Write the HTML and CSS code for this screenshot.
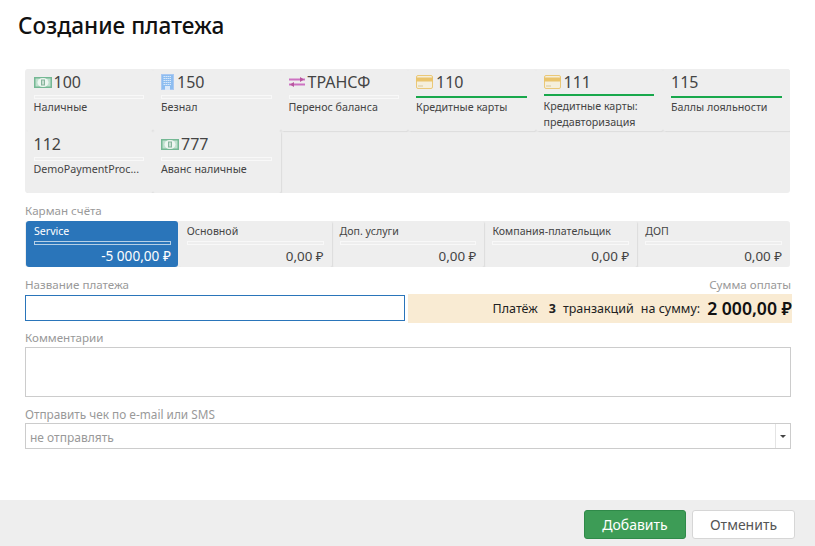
FILE: index.html
```html
<!DOCTYPE html>
<html lang="ru">
<head>
<meta charset="utf-8">
<title>Создание платежа</title>
<link rel="stylesheet" href="styles.css">
</head>
<body>
<div class="dialog">
  <h1 class="title">Создание платежа</h1>
  <div class="content">
    <div class="methods">
      <div class="method">
        <div class="head"><svg class="ic money" width="18" height="11" viewBox="0 0 18 11"><rect width="18" height="11" fill="#74b894"/><rect x="1.500" y="1.500" width="15" height="8" fill="#bfe0ce"/><ellipse cx="9" cy="5.500" rx="5.500" ry="4.500" fill="#eef6f1"/><rect x="7" y="2.500" width="4" height="6" fill="#86b49c"/><rect x="8.200" y="3.500" width="1.600" height="4" fill="#dcebe2"/></svg><span>100</span></div>
        <div class="bar"></div><div class="name">Наличные</div>
      </div>
      <div class="method">
        <div class="head"><svg class="ic building" width="13" height="16" viewBox="0 0 13 16"><rect width="13" height="16" fill="#8dbdf0"/><rect x=".5" y=".5" width="12" height="15" fill="none" stroke="#a9c8f2"/><path d="M2.500 2.500h8M2.500 4.500h8M2.500 6.500h8M2.500 8.500h8M2.500 10.500h8" stroke="#d9e8fa" stroke-width="1" stroke-dasharray="1.500 .5"/><rect x="4" y="12" width="5" height="4" fill="#dbe9fa"/></svg><span>150</span></div>
        <div class="bar"></div><div class="name">Безнал</div>
      </div>
      <div class="method">
        <div class="head"><svg class="ic transfer" width="16" height="10" viewBox="0 0 16 10"><path d="M0 2.500h16M0 7.500h16" stroke="#cd72c2" stroke-width="2" fill="none"/><path d="M11 0l4 2.500-4 2.500zM5 5l-4 2.500 4 2.500z" fill="#b9559f"/></svg><span>ТРАНСФ</span></div>
        <div class="bar"></div><div class="name">Перенос баланса</div>
      </div>
      <div class="method">
        <div class="head"><svg class="ic card" width="17" height="14" viewBox="0 0 17 14"><rect x=".5" y=".5" width="16" height="13" rx="1.500" fill="#f5efdc" stroke="#eac878"/><rect x="0" y="2.500" width="17" height="4" fill="#eac46c"/><path d="M2 11h5" stroke="#d9c89c"/></svg><span>110</span></div>
        <div class="bar green"></div><div class="name">Кредитные карты</div>
      </div>
      <div class="method tight">
        <div class="head"><svg class="ic card" width="17" height="14" viewBox="0 0 17 14"><rect x=".5" y=".5" width="16" height="13" rx="1.500" fill="#f5efdc" stroke="#eac878"/><rect x="0" y="2.500" width="17" height="4" fill="#eac46c"/><path d="M2 11h5" stroke="#d9c89c"/></svg><span>111</span></div>
        <div class="bar green"></div><div class="name">Кредитные карты: предавторизация</div>
      </div>
      <div class="method">
        <div class="head"><span>115</span></div>
        <div class="bar green"></div><div class="name">Баллы лояльности</div>
      </div>
      <div class="method">
        <div class="head"><span>112</span></div>
        <div class="bar"></div><div class="name">DemoPaymentProc...</div>
      </div>
      <div class="method">
        <div class="head"><svg class="ic money" width="18" height="11" viewBox="0 0 18 11"><rect width="18" height="11" fill="#74b894"/><rect x="1.500" y="1.500" width="15" height="8" fill="#bfe0ce"/><ellipse cx="9" cy="5.500" rx="5.500" ry="4.500" fill="#eef6f1"/><rect x="7" y="2.500" width="4" height="6" fill="#86b49c"/><rect x="8.200" y="3.500" width="1.600" height="4" fill="#dcebe2"/></svg><span>777</span></div>
        <div class="bar"></div><div class="name">Аванс наличные</div>
      </div>
    </div>

    <div class="label pocket-label">Карман счёта</div>
    <div class="pockets">
      <div class="pocket active"><div class="pname">Service</div><div class="bar"></div><div class="amount">-5 000,00 ₽</div></div>
      <div class="pocket"><div class="pname">Основной</div><div class="bar"></div><div class="amount">0,00 ₽</div></div>
      <div class="pocket"><div class="pname">Доп. услуги</div><div class="bar"></div><div class="amount">0,00 ₽</div></div>
      <div class="pocket"><div class="pname">Компания-плательщик</div><div class="bar"></div><div class="amount">0,00 ₽</div></div>
      <div class="pocket"><div class="pname">ДОП</div><div class="bar"></div><div class="amount">0,00 ₽</div></div>
    </div>

    <div class="row-labels"><span class="label">Название платежа</span><span class="label">Сумма оплаты</span></div>
    <div class="pay-row">
      <input class="name-input" type="text">
      <div class="summary"><span>Платёж</span><b class="count">3</b><span>транзакций</span><span class="on">на сумму:</span><b class="total">2 000,00 ₽</b></div>
    </div>

    <div class="label comment-label">Комментарии</div>
    <textarea class="comment"></textarea>

    <div class="label send-label">Отправить чек по e-mail или SMS</div>
    <div class="select"><span class="select-value">не отправлять</span><span class="select-arrow"></span></div>
  </div>
  <div class="footer">
    <button class="btn add">Добавить</button>
    <button class="btn cancel">Отменить</button>
  </div>
</div>
</body>
</html>
```
FILE: styles.css
```css
* { box-sizing: border-box; }
html, body { margin: 0; padding: 0; }
body { background: #fff; font-family: "Noto Sans", "Open Sans", sans-serif; color: #333; width: 815px; height: 546px; overflow: hidden; }
.dialog { width: 815px; height: 546px; display: flex; flex-direction: column; }
.title { margin: 0; padding: 11px 0 0 18px; height: 69px; font-size: 22.6px; line-height: 29px; font-weight: 500; color: #111; }
.content { padding: 0 25px; flex: 1; }

.methods { width: 765px; height: 124px; background: #eee; border-radius: 3px; display: grid; grid-template-columns: repeat(6, 127.5px); grid-auto-rows: 62px; padding-left: .5px; overflow: hidden; }
.method { background: #eee; padding: 2px 9px 0 8px; box-shadow: 1px 1px 1px #dcdcdc; border-radius: 2px; overflow: hidden; }
.head { height: 24px; padding-bottom: 2px; display: flex; align-items: center; font-size: 16px; line-height: 22px; color: #444; }
.ic { flex: none; }
.money { margin-right: 2px; }
.building, .transfer, .card { margin-right: 3px; }
.bar { height: 4px; border: 1px solid #f8f8f8; background: #eee; }
.bar.green { border: 0; height: 2px; margin-top: 1px; margin-bottom: 1px; background: #18a84c; }
.name { font-size: 10.7px; line-height: 16px; color: #444; }
.tight .bar { margin-top: -1px; }
.tight .name { margin-top: 2px; line-height: 16px; }

.label { font-size: 11.6px; line-height: 16px; color: #999; }
.pocket-label { margin-top: 10px; height: 18px; }
.pockets { width: 765px; height: 46px; display: grid; grid-template-columns: repeat(5, 1fr); background: #eee; border-radius: 3px; padding-left: 1px; overflow: hidden; }
.pocket { padding: 2px 8px 0; box-shadow: 1px 1px 1px #dcdcdc; border-radius: 2px; color: #444; }
.pname { font-size: 10.6px; line-height: 16px; }
.pocket .bar { margin-top: 2px; }
.amount { font-size: 13.4px; line-height: 18px; text-align: right; margin-top: 2px; }
.pocket.active { background: #2a75ba; color: #fff; box-shadow: none; border-radius: 3px; margin-right: 1px; padding-right: 7px; }
.active .bar { background: #2a75ba; border-color: #b5cfe6; }
.active .amount { font-size: 13.6px; }

.row-labels { display: flex; justify-content: space-between; width: 766px; margin-top: 10px; height: 17px; }
.pay-row { display: flex; width: 767px; height: 29px; gap: 3px; }
.name-input { width: 380px; height: 26px; margin-top: 1px; border: 1px solid #2a75ba; outline: 0; background: #fff; border-radius: 0; padding: 0 5px; }
.summary { flex: 1; height: 29px; background: #f9ebd3; display: flex; align-items: center; justify-content: flex-end; font-size: 12.5px; color: #222; padding-bottom: 1px; }
.count { margin: 0 7px 0 11px; }
.on { margin-left: 7px; margin-right: 7px; }
.total { font-size: 17.6px; font-weight: 600; color: #111; }

.comment-label { margin-top: 7px; height: 17px; }
.comment { display: block; width: 766px; height: 50px; border: 1px solid #ccc; border-radius: 0; resize: none; outline: 0; background: #fff; }
.send-label { margin-top: 9px; height: 17px; font-size: 11.8px; }
.select { width: 766px; height: 26px; border: 1px solid #ccc; display: flex; justify-content: space-between; position: relative; }
.select-value { font-size: 12px; line-height: 27px; padding-left: 4px; color: #999; }
.select-arrow { width: 15px; border-left: 1px solid #e4e4e4; position: relative; }
.select-arrow::after { content: ""; position: absolute; left: 4px; top: 11px; border: 3px solid transparent; border-top: 3px solid #444; border-bottom: 0; }

.footer { height: 46px; background: #eee; display: flex; justify-content: flex-end; gap: 6px; padding: 10px 20px 0 0; }
.btn { width: 103px; height: 29px; font-family: inherit; font-size: 14px; border-radius: 3px; padding: 0; }
.add { width: 102px; background: #3d9c56; border: 1px solid #2f8a49; color: #fff; }
.cancel { background: #fff; border: 1px solid #d6d6d6; color: #555; }
```
